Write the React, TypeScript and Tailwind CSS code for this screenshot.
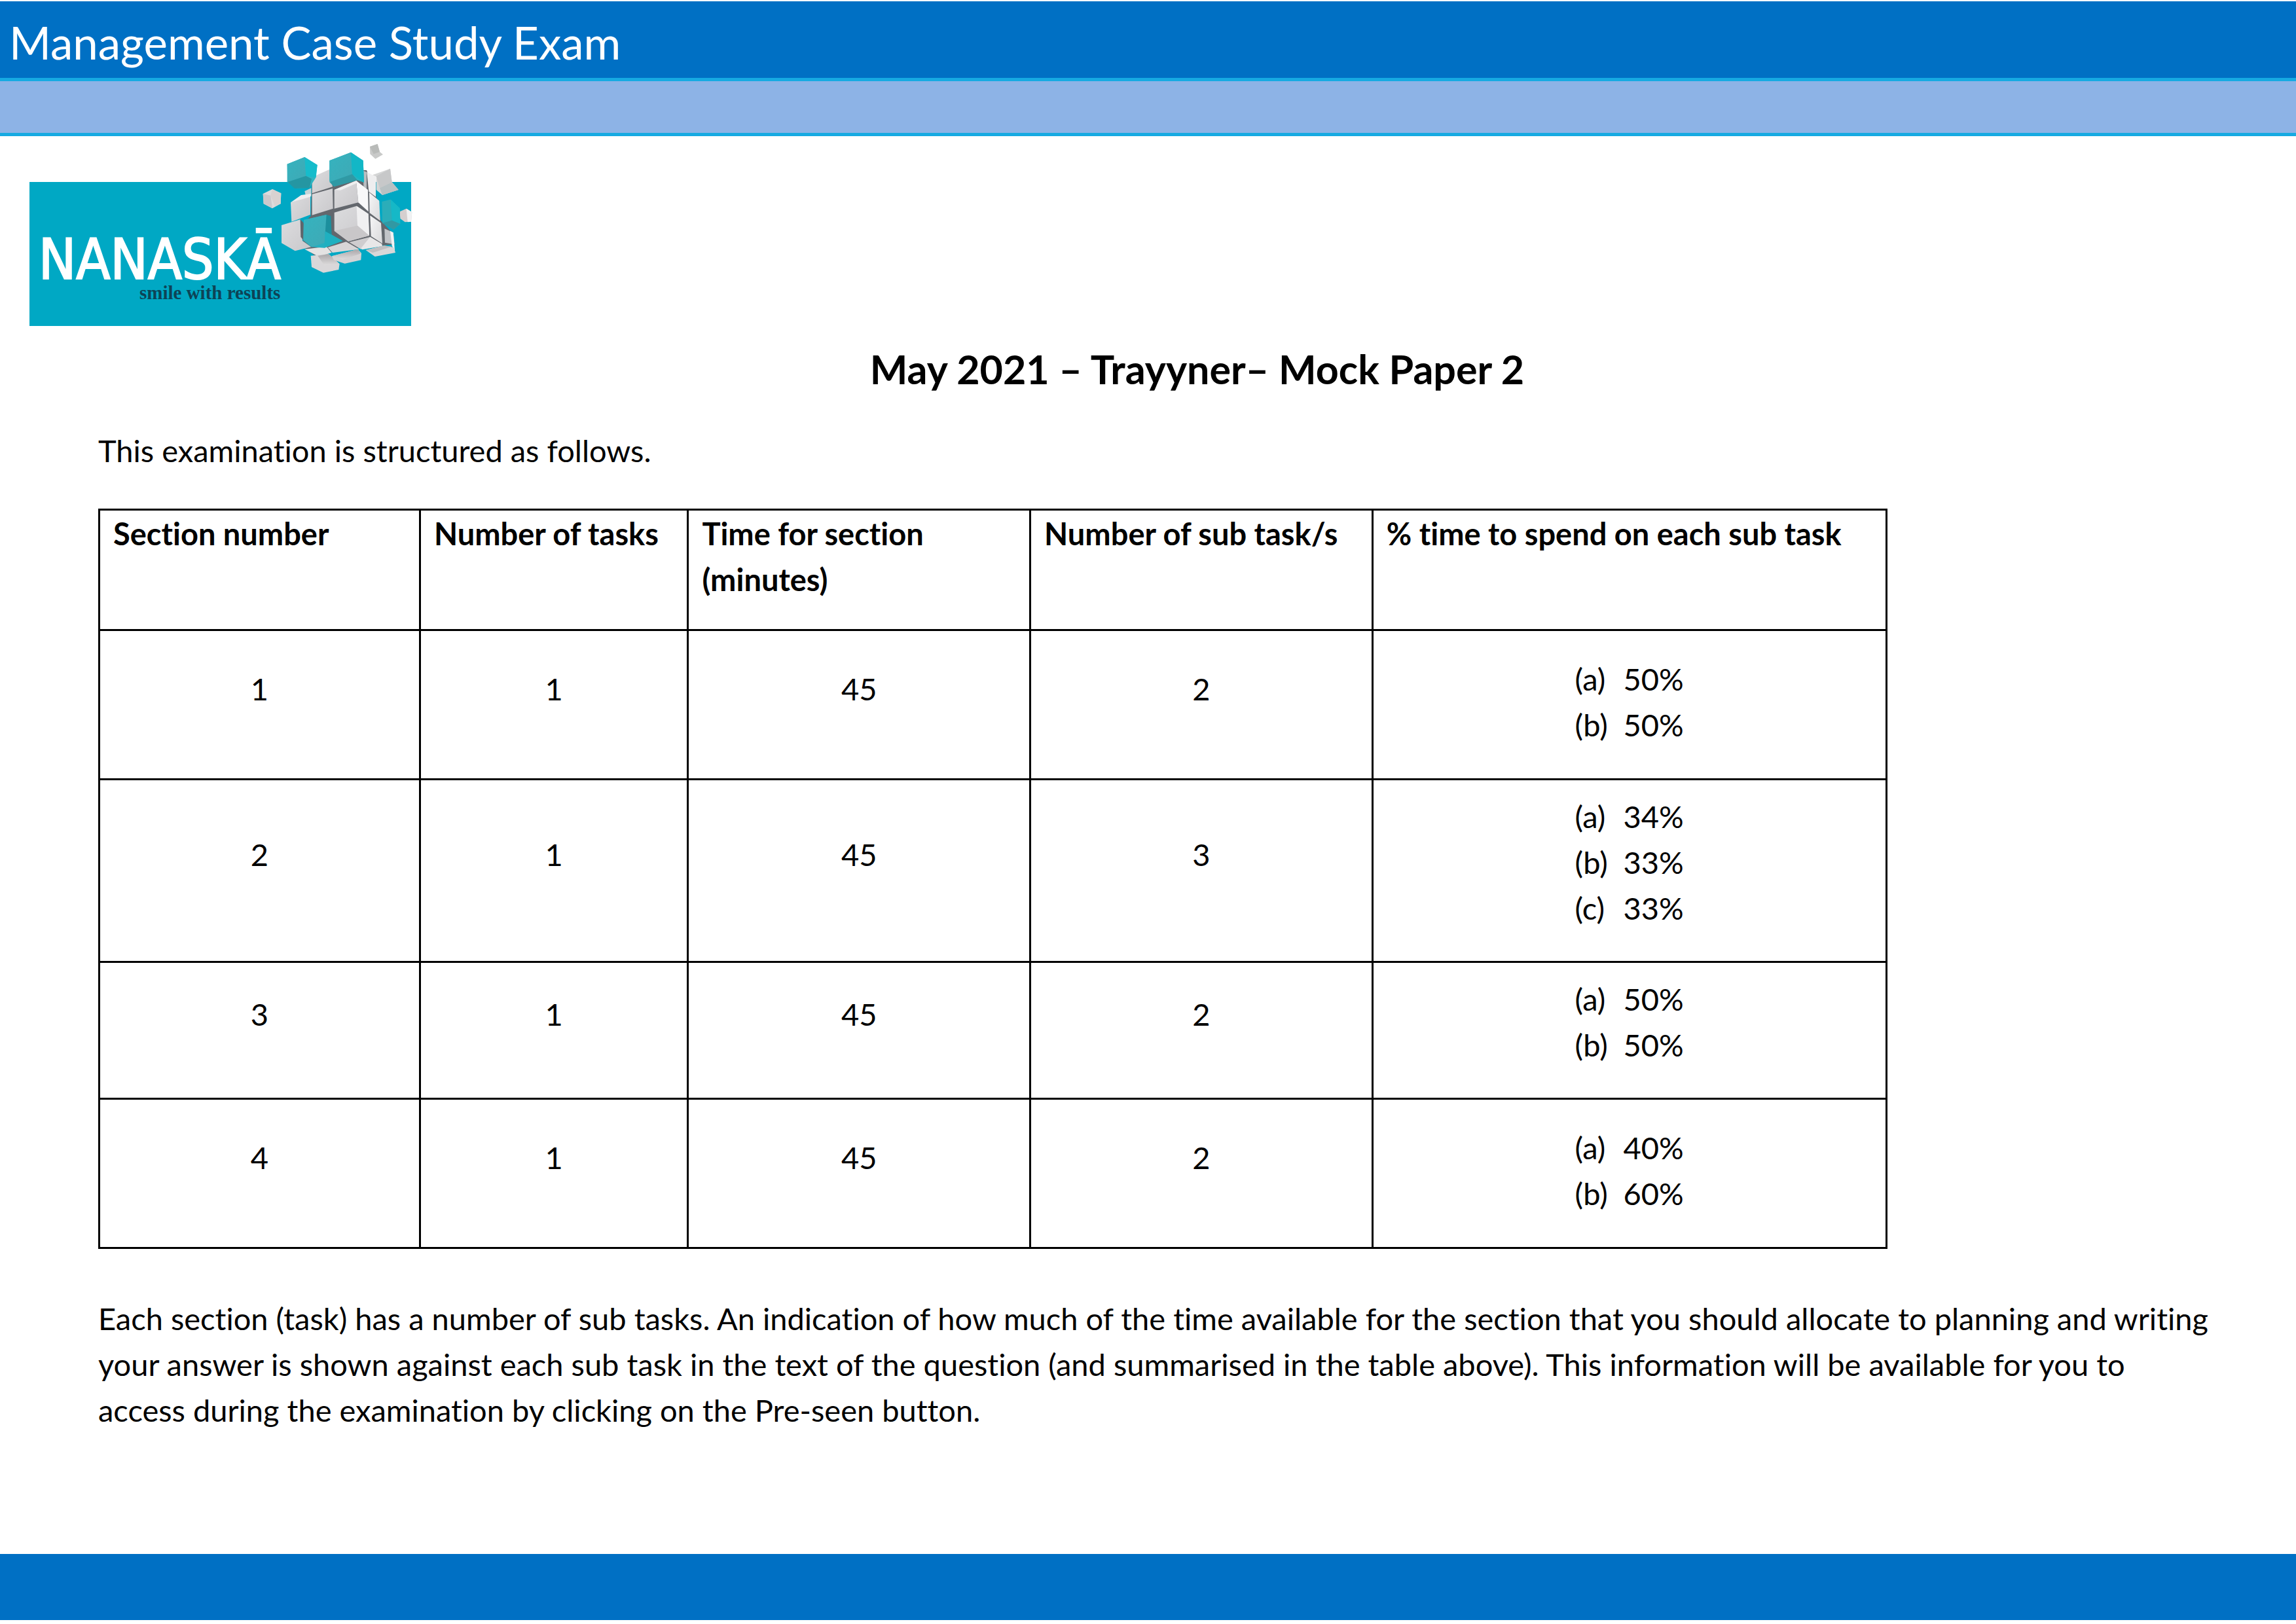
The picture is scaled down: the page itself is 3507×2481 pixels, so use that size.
type Section = {
  number: number;
  tasks: number;
  minutes: number;
  split: string[];
  rowClass: string;
  listClass: string;
};

const sections: Section[] = [
  { number: 1, tasks: 1, minutes: 45, split: ["50%", "50%"], rowClass: "h-[228px]", listClass: "pt-[38px]" },
  { number: 2, tasks: 1, minutes: 45, split: ["34%", "33%", "33%"], rowClass: "h-[279px]", listClass: "pt-5" },
  { number: 3, tasks: 1, minutes: 45, split: ["50%", "50%"], rowClass: "h-[209px]", listClass: "pt-5" },
  { number: 4, tasks: 1, minutes: 45, split: ["40%", "60%"], rowClass: "h-[228px]", listClass: "pt-[38px]" },
];

const columns = [
  { label: "Section number", width: "w-[17.95%]" },
  { label: "Number of tasks", width: "w-[15%]" },
  { label: "Time for section (minutes)", width: "w-[19.15%]" },
  { label: "Number of sub task/s", width: "w-[19.15%]" },
  { label: "% time to spend on each sub task", width: "w-[28.75%]" },
];

function Logo() {
  return (
    <svg viewBox="0 0 590 280" className="block w-[590px]" role="img" aria-label="Nanaska, smile with results">
      <defs>
        <linearGradient id="pale" x1="0" y1="0" x2="1" y2="1">
          <stop offset="0" stopColor="#dcdcde" />
          <stop offset="1" stopColor="#c9c8cb" />
        </linearGradient>
        <linearGradient id="white" x1="0" y1="0" x2="1" y2="1">
          <stop offset="0" stopColor="#f6f6f7" />
          <stop offset="1" stopColor="#d9d9db" />
        </linearGradient>
        <linearGradient id="under" x1="0" y1="0" x2="0" y2="1">
          <stop offset="0" stopColor="#a9a6a8" />
          <stop offset="1" stopColor="#dedcdd" />
        </linearGradient>
        <linearGradient id="teal" x1="0" y1="0" x2="1" y2="1">
          <stop offset="0" stopColor="#35b3bf" />
          <stop offset="1" stopColor="#3fa9b5" />
        </linearGradient>
      </defs>
      <rect x="0" y="60" width="583" height="220" fill="#00a8c4" />
      <text x="14" y="208" fontSize="85" fill="#fff" stroke="#fff" strokeWidth="2" fontFamily="'DejaVu Sans Condensed', 'Open Sans', sans-serif">
        NANASKĀ
      </text>
      <text x="168" y="239" fontSize="29" fontWeight="700" fill="#0d4356" fontFamily="'Liberation Serif', serif">
        smile with results
      </text>
      <g transform="translate(335 -8) scale(0.33333)">
        {/* loose blocks */}
        <path d="M555 42 590 30 600 66 615 78 580 98 556 76Z" fill="#c9cac9" />
        <path d="M555 42 590 30 600 66 572 76Z" fill="#b9bbb9" />
        <path d="M65 258 108 237 148 256 146 304 108 325 68 304Z" fill="#dddbdc" />
        <path d="M65 258 100 266 108 325 68 304Z" fill="#cbc9cc" />
        <path d="M108 237 148 256 146 304 120 316 100 266Z" fill="#d8d2d1" />
        <path d="M567 172 648 143 656 205 686 240 612 264 584 240 584 180Z" fill="#d4d5d5" />
        <path d="M584 178 648 143 656 205 600 232Z" fill="#c7c8c9" />
        <path d="M600 232 656 205 686 240 612 264Z" fill="#b8c1c3" />
        <path d="M692 340 722 326 748 342 744 386 716 388 694 372Z" fill="#d5cfcf" />
        <path d="M722 326 748 342 744 386 728 388Z" fill="#f0f1f2" />
        {/* shadowed core */}
        <path d="M290 190 390 150 540 150 582 260 604 380 660 440 668 490 560 500 460 510 300 540 250 500 244 400 284 360Z" fill="#63676d" />
        {/* rear columns */}
        <path d="M256 246 286 232 286 270 262 272Z" fill="#c5d4d7" />
        <path d="M290 182 370 146 384 226 290 256Z" fill="url(#pale)" />
        <path d="M524 152 540 158 540 236 526 226Z" fill="#b8bdc0" />
        <path d="M541 158 582 180 582 272 550 248Z" fill="#eeeeef" />
        {/* upper row */}
        <path d="M192 298 282 264 282 354 196 386Z" fill="url(#pale)" />
        <path d="M192 298 240 264 286 258 282 272Z" fill="#eeeeef" />
        <path d="M290 260 384 234 386 326 290 356Z" fill="url(#pale)" />
        <path d="M392 240 492 198 502 298 392 326Z" fill="url(#pale)" />
        <path d="M492 198 546 240 548 340 502 298Z" fill="#f8f8f9" />
        <path d="M392 240 492 198 502 206 420 242Z" fill="#efefef" />
        <path d="M552 252 598 290 602 382 554 346Z" fill="url(#white)" />
        {/* middle row */}
        <path d="M150 402 236 376 246 474 286 502 212 520 150 484Z" fill="url(#pale)" />
        <path d="M236 376 250 390 250 470 238 456Z" fill="#5f656b" />
        <path d="M256 512 356 500 380 528 320 546Z" fill="#e4e3e3" />
        <path d="M392 344 494 314 548 350 552 450 456 476 392 428Z" fill="url(#pale)" />
        <path d="M494 314 548 350 552 450 498 404Z" fill="#f0f0f1" />
        <path d="M392 428 498 404 552 450 456 476Z" fill="#c9c7c9" />
        <path d="M556 358 606 392 612 486 560 452Z" fill="url(#white)" />
        <path d="M622 418 662 436 668 490 624 482Z" fill="#c2c4c8" />
        <path d="M648 428 662 436 670 528 656 496Z" fill="#f2f2f3" />
        {/* bottom faces */}
        <path d="M460 480 556 456 610 488 514 512Z" fill="#cfcdcf" />
        <path d="M556 456 610 488 612 498 520 514 514 508Z" fill="#e8e7e8" />
        <path d="M362 504 446 478 506 512 384 528Z" fill="#d8d6d7" />
        <path d="M536 516 620 496 664 504 672 528 578 546Z" fill="#dad7d8" />
        <path d="M536 516 620 496 656 500 568 528Z" fill="#c2bfc1" />
        <path d="M284 542 366 534 416 580 412 606 342 620 288 594Z" fill="#d9d7d9" />
        <path d="M316 542 366 534 416 580 346 586Z" fill="url(#under)" />
        <path d="M380 544 500 512 516 530 514 562 440 578 390 562Z" fill="#d5d3d4" />
        <path d="M380 544 500 512 514 532 430 560Z" fill="url(#under)" />
        {/* teal blocks */}
        <path d="M176 122 256 90 314 126 306 186 278 230 220 234 176 204Z" fill="#2eb5c2" />
        <path d="M176 122 256 90 262 176 178 204Z" fill="url(#teal)" />
        <path d="M256 90 314 126 308 184 262 176Z" fill="#16bccb" />
        <path d="M178 204 262 176 288 190 278 232 210 234Z" fill="#2596a2" />
        <path d="M370 106 468 68 524 106 528 206 498 196 390 224 370 198Z" fill="#24b5c3" />
        <path d="M370 106 468 68 474 168 370 204Z" fill="url(#teal)" />
        <path d="M468 68 524 106 528 206 474 168Z" fill="#12b7c6" />
        <path d="M370 204 474 168 498 196 390 226Z" fill="#3099a4" />
        <path d="M252 378 356 354 380 446 430 474 346 506 286 502 250 472Z" fill="#24afc0" />
        <path d="M252 378 356 354 362 478 290 502 250 470Z" fill="url(#teal)" />
        <path d="M356 354 376 360 380 446 350 440Z" fill="#1c8f9d" />
        <path d="M350 430 380 446 430 474 346 506Z" fill="#1fb0c0" />
        <path d="M610 294 650 284 692 324 694 396 664 422 612 392Z" fill="#2badb9" />
        <path d="M650 284 692 324 694 396 656 380Z" fill="#15b8c7" />
        <path d="M612 392 656 380 694 396 664 422Z" fill="#3298a3" />
      </g>
    </svg>
  );
}

export default function App() {
  return (
    <div className="flex min-h-screen flex-col bg-white pt-[2px] font-['Lato',sans-serif] text-[47px] leading-[70px] text-black [font-variant-ligatures:none]">
      <header>
        <div className="flex h-[117px] items-center bg-[#0070c4] pt-2 pl-[14px] text-[69px] text-white">Management Case Study Exam</div>
        <div className="h-[89px] border-y-[5px] border-[#16aae2] bg-[#8db3e6]" />
      </header>

      <div className="mt-[10px] ml-[45px]">
        <Logo />
      </div>

      <main className="pl-[150px]">
        <h1 className="mt-[31px] text-center text-[61px] font-bold">May 2021 – Trayyner– Mock Paper 2</h1>
        <p className="mt-[54px]">This examination is structured as follows.</p>

        <table className="mt-[54px] w-[81.4%] table-fixed border-collapse border-[3px] border-black">
          <thead>
            <tr className="h-[184px]">
              {columns.map((column) => (
                <th key={column.label} scope="col" className={`border-[3px] border-black pl-5 text-left align-top font-bold ${column.width}`}>
                  {column.label}
                </th>
              ))}
            </tr>
          </thead>
          <tbody>
            {sections.map((section) => (
              <tr key={section.number} className={`text-center ${section.rowClass}`}>
                {[section.number, section.tasks, section.minutes, section.split.length].map((value, index) => (
                  <td key={index} className="border-[3px] border-black pb-[50px] align-middle">
                    {value}
                  </td>
                ))}
                <td className={`border-[3px] border-black align-top ${section.listClass}`}>
                  <ol className="inline-block text-left">
                    {section.split.map((share, index) => (
                      <li key={index} className="grid grid-cols-[74px_auto]">
                        <span>({"abc"[index]})</span>
                        <span>{share}</span>
                      </li>
                    ))}
                  </ol>
                </td>
              </tr>
            ))}
          </tbody>
        </table>

        <p className="mt-[71px] pr-[125px]">
          Each section (task) has a number of sub tasks. An indication of how much of the time available for the section that you should allocate to planning and writing your answer is shown against each sub task in the text of the question (and summarised in the table above). This information will be available for you to access during the examination by clicking on the Pre-seen button.
        </p>
      </main>

      <footer className="mt-auto mb-[6px] h-[101px] bg-[#0070c4]" />
    </div>
  );
}
